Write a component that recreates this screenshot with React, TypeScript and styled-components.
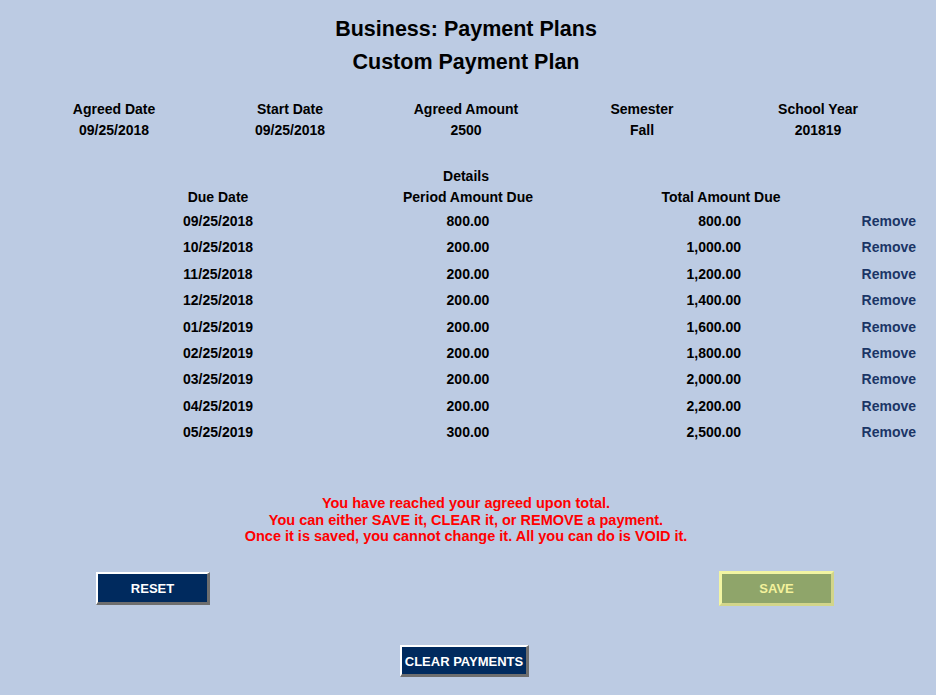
import React from 'react';
import styled, { createGlobalStyle } from 'styled-components';

const GlobalStyle = createGlobalStyle`
  html, body {
    margin: 0;
    padding: 0;
    background: #bccbe3;
  }
  body {
    font-family: "Liberation Sans", Arial, sans-serif;
    color: #000;
  }
`;

const Page = styled.div`
  width: 936px;
  height: 695px;
  overflow: hidden;
  padding-top: 13px;
  box-sizing: border-box;
`;

const Title = styled.h1`
  margin: 0 4px 0 0;
  font-size: 21.5px;
  line-height: 33px;
  font-weight: bold;
  text-align: center;
`;

const Summary = styled.div`
  display: grid;
  grid-template-columns: repeat(5, 176px);
  margin: 20px 0 0 26px;
`;

const SummaryCell = styled.div`
  font-size: 14px;
  font-weight: bold;
  line-height: 21px;
  text-align: center;
`;

const DetailsTitle = styled.div`
  margin-top: 24px;
  font-size: 14px;
  font-weight: bold;
  line-height: 22px;
  text-align: center;
  padding-right: 4px;
`;

const DetailsGrid = styled.div`
  display: grid;
  grid-template-columns: 200px 300px 206px 92px;
  margin-left: 118px;
`;

const HeadCell = styled.div`
  font-size: 14px;
  font-weight: bold;
  line-height: 21px;
  text-align: center;
`;

const Cell = styled.div<{ $align?: 'left' | 'center' | 'right'; $pr?: number }>`
  font-size: 14px;
  font-weight: bold;
  height: 26.375px;
  line-height: 26.375px;
  text-align: ${({ $align }) => $align || 'center'};
  padding-right: ${({ $pr }) => $pr || 0}px;
`;

const RemoveLink = styled.a`
  color: #1b3566;
  text-decoration: none;
  cursor: pointer;
`;

const Message = styled.div`
  margin-top: 50px;
  color: #ff0000;
  font-size: 14.5px;
  font-weight: bold;
  line-height: 16.5px;
  text-align: center;
  padding-right: 4px;
`;

const ButtonRow = styled.div`
  display: flex;
  justify-content: space-between;
  align-items: flex-start;
  margin: 26px 102px 0 96px;
`;

const NavyButton = styled.button<{ $w: number; $h: number }>`
  width: ${({ $w }) => $w}px;
  height: ${({ $h }) => $h}px;
  margin-top: 1px;
  background: #002a5e;
  color: #fff;
  font-family: "Liberation Sans", Arial, sans-serif;
  font-size: 13px;
  font-weight: bold;
  border-style: solid;
  border-width: 2px 3px 3px 2px;
  border-color: #ffffff #6e6e6e #6e6e6e #ffffff;
  padding: 2px 0 0;
  cursor: pointer;
`;

const SaveButton = styled.button`
  width: 115px;
  height: 35px;
  background: #8fa56a;
  color: #f4f29c;
  font-family: "Liberation Sans", Arial, sans-serif;
  font-size: 13px;
  font-weight: bold;
  border-style: solid;
  border-width: 3px;
  border-color: #f2f5a2 #d2d58a #d2d58a #f2f5a2;
  padding: 1px 0 0;
  cursor: pointer;
`;

const ClearRow = styled.div`
  display: flex;
  margin: 38px 0 0 400px;
`;

const summary = [
  ['Agreed Date', '09/25/2018'],
  ['Start Date', '09/25/2018'],
  ['Agreed Amount', '2500'],
  ['Semester', 'Fall'],
  ['School Year', '201819'],
];

const payments = [
  ['09/25/2018', '800.00', '800.00'],
  ['10/25/2018', '200.00', '1,000.00'],
  ['11/25/2018', '200.00', '1,200.00'],
  ['12/25/2018', '200.00', '1,400.00'],
  ['01/25/2019', '200.00', '1,600.00'],
  ['02/25/2019', '200.00', '1,800.00'],
  ['03/25/2019', '200.00', '2,000.00'],
  ['04/25/2019', '200.00', '2,200.00'],
  ['05/25/2019', '300.00', '2,500.00'],
];

export default function App() {
  return (
    <Page>
      <GlobalStyle />
      <Title>
        Business: Payment Plans
        <br />
        Custom Payment Plan
      </Title>

      <Summary>
        {summary.map(([label]) => (
          <SummaryCell key={label}>{label}</SummaryCell>
        ))}
        {summary.map(([label, value]) => (
          <SummaryCell key={label + '-v'}>{value}</SummaryCell>
        ))}
      </Summary>

      <DetailsTitle>Details</DetailsTitle>
      <DetailsGrid>
        <HeadCell>Due Date</HeadCell>
        <HeadCell>Period Amount Due</HeadCell>
        <HeadCell>Total Amount Due</HeadCell>
        <HeadCell />
        {payments.map(([date, amount, total]) => (
          <React.Fragment key={date}>
            <Cell>{date}</Cell>
            <Cell>{amount}</Cell>
            <Cell $align="right" $pr={83}>{total}</Cell>
            <Cell $align="right" $pr={0}>
              <RemoveLink>Remove</RemoveLink>
            </Cell>
          </React.Fragment>
        ))}
      </DetailsGrid>

      <Message>
        You have reached your agreed upon total.
        <br />
        You can either SAVE it, CLEAR it, or REMOVE a payment.
        <br />
        Once it is saved, you cannot change it. All you can do is VOID it.
      </Message>

      <ButtonRow>
        <NavyButton $w={114} $h={33}>RESET</NavyButton>
        <SaveButton>SAVE</SaveButton>
      </ButtonRow>

      <ClearRow>
        <NavyButton $w={129} $h={32}>CLEAR PAYMENTS</NavyButton>
      </ClearRow>
    </Page>
  );
}
